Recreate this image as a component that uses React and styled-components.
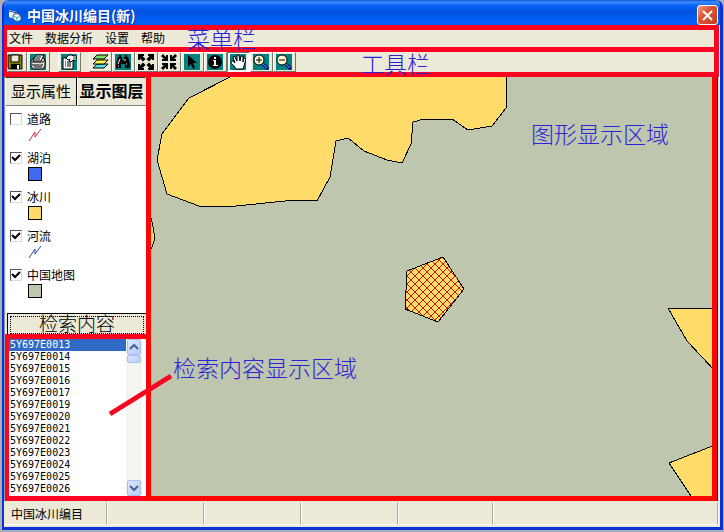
import React, { useState } from "react";
import styled, { createGlobalStyle, css } from "styled-components";

const RED = "#fb0420";
const FACE = "#ece9d8";
const LAND = "#bec6ae";
const ICE = "#ffdb69";
const TEAL = "#008080";

const GlobalStyle = createGlobalStyle`
  *, *::before, *::after { box-sizing: border-box; }
  body {
    margin: 0;
    background: #a9afb8;
    color: #000;
    font: 12px "Liberation Sans", "Noto Sans CJK SC", sans-serif;
  }
  button { font: inherit; color: inherit; margin: 0; }
  ul { list-style: none; margin: 0; padding: 0; }
`;

const Desktop = styled.div`
  min-height: 100vh;
  display: flex;
  padding: 0 1px 2px 2px;
`;

const Window = styled.main`
  flex: 1;
  min-width: 0;
  display: flex;
  flex-direction: column;
  background: ${FACE};
  border: solid #0831d9;
  border-width: 0 3px 3px 2px;
  border-radius: 7px 7px 0 0;
  overflow: hidden;
`;

const TitleBar = styled.header`
  height: 25px;
  display: flex;
  align-items: center;
  gap: 6px;
  padding: 5px 2px 0 4px;
  background: linear-gradient(#0a4fd0 0, #3c8cff 2px, #0560f0 6px, #0052e0 12px, #0062fb 22px, #005cf0 25px);
`;

const Title = styled.h1`
  flex: 1;
  margin: 0;
  color: #fff;
  font: bold 14px/18px "Noto Sans CJK SC", sans-serif;
  text-shadow: 1px 1px #0a2f9c;
`;

const CloseButton = styled.button`
  width: 21px;
  height: 20px;
  padding: 0;
  display: grid;
  place-items: center;
  border: 1px solid #fff;
  border-radius: 3px;
  background: linear-gradient(135deg, #f0a08a, #dd5433 40%, #c5401c);
`;

const MenuBar = styled.nav`
  position: relative;
  height: 27px;
  margin-right: 1px;
  display: flex;
  align-items: center;
  gap: 12px;
  padding-left: 2px;
  border: solid ${RED};
  border-width: 5px 5px 5px 3px;
`;

const MenuItem = styled.button`
  padding: 0;
  border: 0;
  background: none;
  line-height: 16px;
`;

const ToolBar = styled.div`
  position: relative;
  height: 25px;
  margin-right: 1px;
  display: flex;
  border: solid ${RED};
  border-width: 0 5px 5px 3px;
`;

const ToolButton = styled.button`
  width: ${(p) => (p.$first ? 20 : 23)}px;
  margin-left: ${(p) => (p.$gap ? 8 : 0)}px;
  padding: 0 3px 0 0;
  display: flex;
  align-items: center;
  justify-content: flex-end;
  border: solid;
  border-width: 1px;
  border-color: #fff #77756a #77756a #fff;
  background: ${(p) => (p.$pressed ? "#f8f7f1" : FACE)};
  ${(p) => p.$pressed && css`border-color: #77756a #fff #fff #77756a;`}
`;

const Glyph = styled.svg`
  display: block;
  flex: none;
  background: ${(p) => p.$fill || "none"};
`;

const Body = styled.div`
  position: relative;
  flex: 1;
  display: flex;
  padding-right: 3px;
`;

const Sidebar = styled.aside`
  width: 142px;
  flex: none;
  display: flex;
  flex-direction: column;
  border-left: 1px solid #8b97ad;
`;

const Tabs = styled.div`
  height: 28px;
  display: grid;
  grid-template-columns: 72px 1fr;
`;

const Tab = styled.button`
  padding: 0;
  overflow: hidden;
  white-space: nowrap;
  border: 0;
  border-top: 1px solid #33322c;
  border-right: 1px solid ${(p) => (p.$active ? FACE : "#000")};
  border-left: 1px solid #fff;
  background: ${FACE};
  font-size: ${(p) => (p.$active ? 16 : 15)}px;
  font-weight: ${(p) => (p.$active ? 700 : 400)};
  line-height: 24px;
`;

const LayerList = styled.ul`
  flex: 1;
  margin-left: 1px;
  padding: 3px 0 0 4px;
  border-top: 1px solid #858279;
  background: #fff;
`;

const LayerItem = styled.li`
  height: 39px;
`;

const LayerLabel = styled.label`
  height: 19px;
  display: flex;
  align-items: center;
  gap: 5px;
`;

const Check = styled.input`
  appearance: none;
  width: 12px;
  height: 12px;
  margin: 0;
  border: 1px solid;
  border-color: #55534b #dedbcd #dedbcd #55534b;
  background: #fff;
  &:checked {
    background: #fff url("data:image/svg+xml,%3Csvg xmlns='http://www.w3.org/2000/svg' viewBox='0 0 10 10'%3E%3Cpath d='M1 4l3 3L9 2' fill='none' stroke='%23000' stroke-width='2'/%3E%3C/svg%3E");
  }
`;

const Swatch = styled.div`
  width: 14px;
  height: 14px;
  margin-left: 18px;
  border: 1px solid #000;
  background: ${(p) => p.$color};
`;

const LineSymbol = styled.svg`
  display: block;
  margin-left: 18px;
`;

const SearchButton = styled.button`
  height: 21px;
  margin-left: 2px;
  padding: 3px;
  display: flex;
  overflow: hidden;
  border: 1px solid #000;
  border-width: 1px 0 0 1px;
  background: ${FACE};
`;

const SearchCaption = styled.span`
  flex: 1;
  height: 16px;
  outline: 1px dotted #000;
  font-size: 19px;
  font-weight: 300;
  line-height: 16px;
`;

const ResultFrame = styled.section`
  height: 167px;
  display: flex;
  padding-right: 4px;
  border: solid ${RED};
  border-width: 5px 0 5px 4px;
  background: #fff;
`;

const Results = styled.ul`
  flex: 1;
  overflow: hidden;
  font: 10px/12px "DejaVu Sans Mono", monospace;
`;

const Result = styled.li`
  padding-left: 1px;
  cursor: default;
  background: ${(p) => (p.$selected ? "#316ac5" : "#fff")};
  color: ${(p) => (p.$selected ? "#fff" : "#000")};
`;

const ScrollBar = styled.div`
  width: 16px;
  display: flex;
  flex-direction: column;
  padding: 0 1px;
  background: #f5f5ef;
`;

const ScrollPart = styled.button`
  height: ${(p) => (p.$thumb ? 8 : 16)}px;
  margin-top: ${(p) => (p.$last ? "auto" : "0")};
  padding: 0;
  display: grid;
  place-items: center;
  border: 1px solid #a9bff0;
  border-radius: 2px;
  background: linear-gradient(135deg, #dce7ff, #b8cdfb);
`;

const MapFrame = styled.section`
  position: relative;
  flex: 1;
  min-width: 0;
  display: flex;
  border: solid #fb0505;
  border-width: 0 5px 5px;
  background: ${LAND};
  box-shadow: 1px 0 #000;
`;

const MapCanvas = styled.svg`
  flex: 1;
  width: 100%;
  min-width: 0;
  height: 419px;
`;

const Note = styled.span`
  position: absolute;
  left: ${(p) => p.$x}px;
  top: ${(p) => p.$y}px;
  z-index: 2;
  color: #2a22d8;
  font: 300 23px/26px "Noto Sans CJK SC", sans-serif;
  white-space: nowrap;
  pointer-events: none;
`;

const Pointer = styled.svg`
  position: absolute;
  left: 104px;
  top: 296px;
  z-index: 1;
  pointer-events: none;
`;

const StatusBar = styled.footer`
  height: 26px;
  display: grid;
  grid-template-columns: 105px 97px 97px 97px 95px 1fr;
`;

const StatusCell = styled.div`
  display: flex;
  align-items: center;
  margin: 1px 2px 2px 0;
  padding-left: 6px;
  border: 1px solid;
  border-color: ${FACE} #aca899 #fff ${FACE};
  box-shadow: 1px 0 #fff;
`;

const arrowOut = "M0 0h6v2H4.500l3 3L5 7.500l-3-3V6H0z";
const arrowIn = "M7 7H1V5h2L0 2 2 0l3 3V1h2z";
const turns = [0, 90, 180, 270];

const icons = {
  save: (
    <>
      <path d="M1 1h14v14H2l-1-1z" fill="#808000" stroke="#000" />
      <path d="M4 1h8v7H4z" fill="#ece9d8" stroke="#000" />
      <path d="M4 10h9v5H4z" fill="#000" />
      <path d="M10 11h2v4h-2z" fill="#fff" />
    </>
  ),
  print: (
    <>
      <path d="M1 7l3-3h10l1 3v5l-2 3H3l-2-3z" fill="#ddd" stroke="#000" />
      <path d="M6 1h8l-3 6H3z" fill="#fff" stroke="#000" />
      <path d="M6 3h5M5 5h5M2 8h11M2 11h11M4 13h8" stroke="#000" />
      <path d="M9 10h2" stroke="#dd0" />
      <path d="M13 8l2-2" stroke="#000" />
    </>
  ),
  properties: (
    <>
      <path d="M2 4h10v11H2z" fill="#fff" stroke="#000" />
      <path d="M4 8h1M6 8h4M4 10h1M6 10h4M4 12h1M6 12h4" stroke="#000" />
      <path d="M5 4l3-3h3l1 1h3v4h-3l-2 2-2-1 1-2-2 1z" fill="#fff" stroke="#000" />
      <path d="M12 2h3v4h-3z" fill="#999" />
    </>
  ),
  layers: (
    <>
      <path d="M1 14l4-4h11l-4 4z" fill="#52e3ef" stroke="#000" />
      <path d="M1 10l4-4h11l-4 4z" fill="#fff451" stroke="#000" />
      <path d="M1 5l4-4h11l-4 4z" fill="#78e16b" stroke="#000" />
    </>
  ),
  find: (
    <>
      <path d="M4 1h2v2h1v3h2V3h1V1h2v2h1l2 7v4h-5v-4H6v4H1v-4l2-7h1z" fill="#000" />
      <path d="M3 10l2-5M10 5v2M11 10h1M3 12h1" stroke="#fff" />
    </>
  ),
  fullExtent: turns.map((a) => <path key={a} d={arrowOut} transform={`rotate(${a} 8 8)`} />),
  shrink: turns.map((a) => <path key={a} d={arrowIn} transform={`rotate(${a} 8 8)`} />),
  select: <path d="M4 1v12l3-3 2 5 2-1-2-5h4z" fill="#000" />,
  identify: (
    <>
      <circle cx="8" cy="8" r="7" fill="#000" />
      <path d="M7 3h2v2H7zM6 6h3v5h2v1H6v-1h1V7H6z" fill="#fff" />
    </>
  ),
  pan: (
    <path
      d="M5 15v-2L1 9V7h2l2 2L3 3l1-1 1 1 2 4V1h2l1 6 1-5h2v6l1-4h1l1 1-2 7-1 3z"
      fill="#fff"
      stroke="#000"
    />
  ),
  zoomIn: (
    <>
      <path d="M10 10l5 5" stroke="#000080" strokeWidth="3" />
      <path d="M10 10l4 4" stroke="#69a8ee" />
      <circle cx="6" cy="6" r="5" fill="#fff5cf" stroke="#000" />
      <path d="M3 6h6M6 3v6" stroke="#000" />
    </>
  ),
  zoomOut: (
    <>
      <path d="M10 10l5 5" stroke="#000080" strokeWidth="3" />
      <path d="M10 10l4 4" stroke="#69a8ee" />
      <circle cx="6" cy="6" r="5" fill="#fff5cf" stroke="#000" />
      <path d="M3 6h6" stroke="#000" />
    </>
  ),
};

const tools = [
  { id: "save", label: "保存" },
  { id: "print", label: "打印", fill: TEAL },
  { id: "properties", label: "属性", fill: TEAL, gap: true },
  { id: "layers", label: "图层", gap: true },
  { id: "find", label: "查找", fill: TEAL },
  { id: "fullExtent", label: "全图" },
  { id: "shrink", label: "缩至" },
  { id: "select", label: "选择", fill: TEAL },
  { id: "identify", label: "信息", fill: TEAL },
  { id: "pan", label: "平移", fill: TEAL },
  { id: "zoomIn", label: "放大", fill: TEAL },
  { id: "zoomOut", label: "缩小", fill: TEAL },
];

const layers = [
  { name: "道路", line: "#d0283c", on: false },
  { name: "湖泊", color: "#4169ee", on: true },
  { name: "冰川", color: ICE, on: true },
  { name: "河流", line: "#2448a8", on: true },
  { name: "中国地图", color: LAND, on: true },
];

const codes = ["13", "14", "15", "16", "17", "19", "20", "21", "22", "23", "24", "25", "26"].map(
  (n) => `5Y697E00${n}`
);

function Chevron({ down }) {
  return (
    <svg width="10" height="8" viewBox="0 0 10 8" fill="none" stroke="#4d6185" strokeWidth="2">
      <path d={down ? "M1 2l4 4 4-4" : "M1 6l4-4 4 4"} />
    </svg>
  );
}

function GlacierMap() {
  return (
    <MapCanvas viewBox="151 77 561 419" preserveAspectRatio="xMinYMin slice" role="img" aria-label="冰川地图">
      <defs>
        <pattern id="hatch" width="8" height="8" x="403" y="256" patternUnits="userSpaceOnUse">
          <path d="M-1 -1L9 9M9 -1L-1 9" stroke="#c41a00" strokeWidth="1" />
        </pattern>
      </defs>
      <g fill={ICE} stroke="#000" shapeRendering="crispEdges">
        <path d="M232 76L189 98 162 134 157 160 167 194 199 206H236L295 200 317 201 330 177 336 141 348 138 364 151 387 160 402 163 411 144 413 122 424 119H452L468 130 492 126 506 108V76z" />
        <path d="M150 214L152 222 155 238 152 247 150 250z" />
        <path d="M715 308H668L687 341 715 371z" />
        <path d="M715 445L669 463 693 499H715z" />
        <path d="M407 271L443 257 464 289 438 322 405 309z" />
        <path d="M407 271L443 257 464 289 438 322 405 309z" fill="url(#hatch)" />
      </g>
    </MapCanvas>
  );
}

export default function App() {
  const [visible, setVisible] = useState(layers.map((l) => l.on));
  const [selected, setSelected] = useState(0);
  const toggle = (i) => setVisible(visible.map((v, n) => (n === i ? !v : v)));

  return (
    <>
      <GlobalStyle />
      <Desktop>
        <Window>
          <TitleBar>
            <svg width="13" height="13" viewBox="0 0 13 13" aria-hidden="true">
              <path d="M1 1l8 2v8l-8-3z" fill="#fff" />
              <path d="M1 2l8 2" stroke="#163b88" />
              <path d="M5 6l4-2 4 3v4l-4 2-4-3z" fill="#fff" stroke="#244985" />
              <path d="M6 7l3 2 3-2M9 9v3" fill="none" stroke="#15a9b8" />
            </svg>
            <Title>中国冰川编目(新)</Title>
            <CloseButton aria-label="关闭">
              <svg width="13" height="13" viewBox="0 0 13 13" stroke="#fff" strokeWidth="2">
                <path d="M2 2l9 9M11 2l-9 9" />
              </svg>
            </CloseButton>
          </TitleBar>

          <MenuBar>
            {["文件", "数据分析", "设置", "帮助"].map((m) => (
              <MenuItem key={m}>{m}</MenuItem>
            ))}
            <Note $x={180} $y={-5}>菜单栏</Note>
          </MenuBar>

          <ToolBar role="toolbar">
            {tools.map((t, i) => (
              <ToolButton key={t.id} aria-label={t.label} $first={i === 0} $gap={t.gap} $pressed={t.id === "pan"}>
                <Glyph $fill={t.fill} width="16" height="16" viewBox="0 0 16 16">
                  {icons[t.id]}
                </Glyph>
              </ToolButton>
            ))}
            <Note $x={354} $y={-2}>工具栏</Note>
          </ToolBar>

          <Body>
            <Sidebar>
              <Tabs role="tablist">
                <Tab role="tab" aria-selected="false">显示属性</Tab>
                <Tab role="tab" aria-selected="true" $active>显示图层</Tab>
              </Tabs>
              <LayerList>
                {layers.map((l, i) => (
                  <LayerItem key={l.name}>
                    <LayerLabel>
                      <Check type="checkbox" checked={visible[i]} onChange={() => toggle(i)} />
                      {l.name}
                    </LayerLabel>
                    {l.line ? (
                      <LineSymbol width="14" height="14" viewBox="0 0 14 14" fill="none" stroke={l.line}>
                        <path d="M1 13L7 4 7 9 13 1" />
                      </LineSymbol>
                    ) : (
                      <Swatch $color={l.color} />
                    )}
                  </LayerItem>
                ))}
              </LayerList>
              <SearchButton>
                <SearchCaption>检索内容</SearchCaption>
              </SearchButton>
              <ResultFrame>
                <Results role="listbox" aria-label="检索内容">
                  {codes.map((c, i) => (
                    <Result
                      key={c}
                      role="option"
                      aria-selected={i === selected}
                      $selected={i === selected}
                      onClick={() => setSelected(i)}
                    >
                      {c}
                    </Result>
                  ))}
                </Results>
                <ScrollBar>
                  <ScrollPart aria-label="向上"><Chevron /></ScrollPart>
                  <ScrollPart aria-label="滑块" $thumb />
                  <ScrollPart aria-label="向下" $last><Chevron down /></ScrollPart>
                </ScrollBar>
              </ResultFrame>
            </Sidebar>

            <MapFrame>
              <GlacierMap />
              <Note $x={380} $y={43}>图形显示区域</Note>
              <Note $x={22} $y={277}>检索内容显示区域</Note>
            </MapFrame>

            <Pointer width="66" height="44" viewBox="0 0 66 44">
              <path d="M2 41L63 3" stroke={RED} strokeWidth="5" />
            </Pointer>
          </Body>

          <StatusBar>
            <StatusCell>中国冰川编目</StatusCell>
            <StatusCell />
            <StatusCell />
            <StatusCell />
            <StatusCell />
            <StatusCell />
          </StatusBar>
        </Window>
      </Desktop>
    </>
  );
}
